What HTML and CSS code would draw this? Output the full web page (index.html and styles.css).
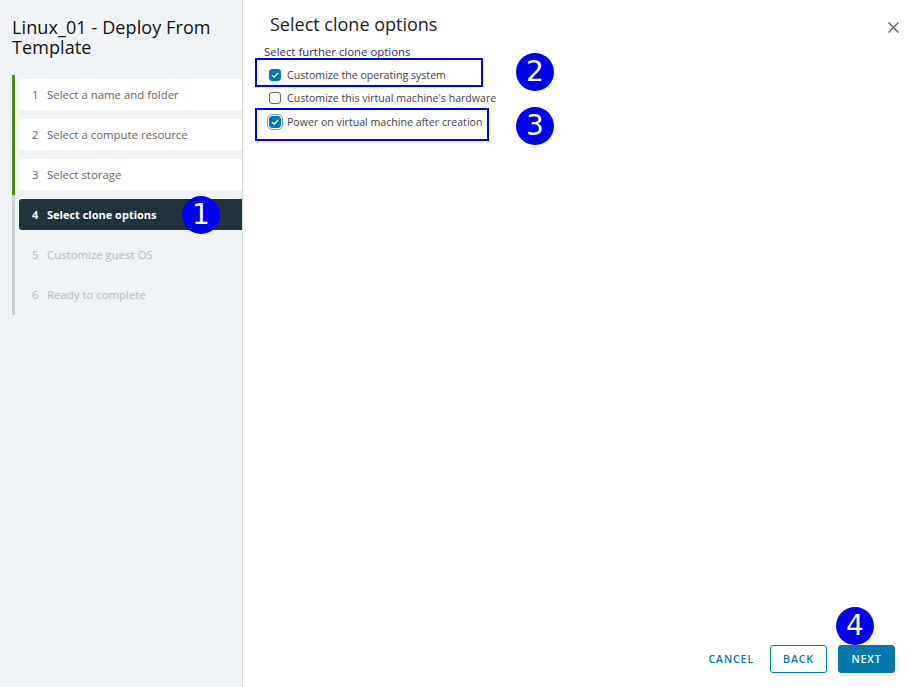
FILE: index.html
```html
<!DOCTYPE html>
<html>
<head>
<meta charset="utf-8">
<link rel="stylesheet" href="styles.css">
</head>
<body>
<div class="wizard">
  <aside class="sidebar">
    <h1 class="wiz-title">Linux_01 - Deploy From Template</h1>
    <ol class="steps">
      <li class="step done"><div class="step-box"><span class="num">1</span>Select a name and folder</div></li>
      <li class="step done"><div class="step-box"><span class="num">2</span>Select a compute resource</div></li>
      <li class="step done"><div class="step-box"><span class="num">3</span>Select storage</div></li>
      <li class="step current"><div class="step-box"><span class="num">4</span>Select clone options</div><span class="badge badge-1">1</span></li>
      <li class="step todo"><div class="step-box"><span class="num">5</span>Customize guest OS</div></li>
      <li class="step todo"><div class="step-box"><span class="num">6</span>Ready to complete</div></li>
    </ol>
  </aside>
  <main class="content">
    <header class="content-head">
      <h2 class="page-title">Select clone options</h2>
      <button class="close" aria-label="Close">
        <svg width="11" height="11" viewBox="0 0 11 11"><path d="M0.5 0.5 L10.5 10.5 M10.5 0.5 L0.5 10.5" stroke="#4e5b63" stroke-width="1.2" fill="none"/></svg>
      </button>
    </header>
    <section class="options">
      <div class="options-label">Select further clone options</div>
      <label class="opt"><span class="cb checked"><svg viewBox="0 0 12 12" width="12" height="12"><path d="M3 6.2 L5.2 8.2 L9 4" stroke="#fff" stroke-width="1.3" fill="none"/></svg></span>Customize the operating system</label>
      <label class="opt"><span class="cb"></span>Customize this virtual machine's hardware</label>
      <label class="opt"><span class="cb checked focus"><svg viewBox="0 0 12 12" width="12" height="12"><path d="M3 6.2 L5.2 8.2 L9 4" stroke="#fff" stroke-width="1.3" fill="none"/></svg></span>Power on virtual machine after creation</label>
      <div class="mark mark-2"></div>
      <div class="mark mark-3"></div>
      <span class="badge badge-2">2</span>
      <span class="badge badge-3">3</span>
    </section>
    <footer class="actions">
      <button class="btn btn-link">CANCEL</button>
      <button class="btn btn-outline">BACK</button>
      <span class="next-wrap"><button class="btn btn-primary">NEXT</button><span class="badge badge-4">4</span></span>
    </footer>
  </main>
</div>
</body>
</html>
```
FILE: styles.css
```css
* { box-sizing: border-box; }
html, body { margin: 0; padding: 0; }
body {
  width: 909px;
  height: 687px;
  overflow: hidden;
  font-family: "Open Sans", "Noto Sans", sans-serif;
  background: #fff;
  color: #333;
}
.wizard {
  display: flex;
  height: 687px;
}
.sidebar {
  width: 243px;
  flex: none;
  background: #eff3f6;
  border-right: 1px solid #d5dadd;
  padding: 17px 0 0 12px;
}
.wiz-title {
  margin: 0;
  font-weight: 400;
  font-size: 18px;
  line-height: 20px;
  color: #111;
  letter-spacing: 0.1px;
}
.steps {
  list-style: none;
  margin: 18px 0 0 0;
  padding: 0;
}
.step {
  position: relative;
  height: 40px;
  border-left: 3px solid #c9cfd3;
  padding: 4px 0 5px 4px;
}
.step.done { border-left-color: #4c8d0f; }
.step-box {
  height: 31px;
  display: flex;
  align-items: center;
  padding-left: 13px;
  font-size: 11.4px;
  border-radius: 3px 0 0 3px;
  color: #666;
}
.num { width: 15px; display: inline-block; }
.step.done .step-box { background: #fff; }
.step.current .step-box {
  background: #21333b;
  color: #fff;
  font-weight: 700;
  font-size: 11px;
}
.step.todo .step-box { color: #b9bdc0; }

.content {
  flex: 1;
  display: flex;
  flex-direction: column;
  position: relative;
}
.content-head {
  display: flex;
  justify-content: space-between;
  align-items: flex-start;
  padding: 12px 10px 0 27px;
}
.page-title {
  margin: 0;
  font-weight: 400;
  font-size: 18px;
  line-height: 24px;
  color: #222;
}
.close {
  border: 0;
  background: none;
  padding: 0;
  margin-top: 10px;
  width: 11px;
  height: 11px;
  display: block;
}
.close svg { display: block; }
.options {
  position: relative;
  padding: 9px 0 0 21px;
  flex: 1;
}
.options-label {
  font-size: 11.4px;
  line-height: 14px;
  color: #333;
  margin-bottom: 4px;
}
.opt {
  display: flex;
  align-items: center;
  height: 23.5px;
  font-size: 10.6px;
  color: #444;
  padding-left: 5px;
}
.cb {
  width: 12px;
  height: 12px;
  border: 1px solid #666;
  border-radius: 3px;
  margin-right: 6px;
  flex: none;
  background: #fff;
}
.cb.checked {
  background: #0079ad;
  border-color: #0079ad;
}
.cb svg { display: block; margin: -1px; }
.cb.focus {
  outline: 1px solid #6aa9da;
  outline-offset: 1px;
}
.mark {
  position: absolute;
  border: 2px solid #0000f0;
  left: 12px;
}
.mark-2 { top: 22px; width: 228px; height: 29px; }
.mark-3 { top: 72px; width: 234px; height: 33px; }
.badge {
  position: absolute;
  width: 38px;
  height: 38px;
  border-radius: 50%;
  background: #0000f5;
  color: #fff;
  font-family: "DejaVu Sans", sans-serif;
  font-size: 28px;
  line-height: 38px;
  text-align: center;
}
.badge-1 { left: 167px; top: 1px; }
.badge-2 { left: 273px; top: 17px; }
.badge-3 { left: 273px; top: 71px; }
.badge-4 { left: -2px; top: -38px; }

.actions {
  display: flex;
  justify-content: flex-end;
  align-items: center;
  gap: 11px;
  padding: 0 14px 14px 0;
}
.next-wrap { position: relative; display: block; }
.btn {
  height: 28px;
  font-family: "Open Sans", sans-serif;
  font-size: 10.5px;
  font-weight: 600;
  letter-spacing: 0.9px;
  border-radius: 3px;
  padding: 0 12px;
  cursor: pointer;
  display: block;
}
.btn-link {
  background: none;
  border: 0;
  color: #0079ad;
  padding: 0 5px;
  margin-right: 0;
}
.btn-outline {
  width: 57px;
  background: #fff;
  border: 1px solid #0079ad;
  color: #0079ad;
}
.btn-primary {
  width: 57px;
  background: #0079ad;
  border: 1px solid #0079ad;
  color: #fff;
}
```
